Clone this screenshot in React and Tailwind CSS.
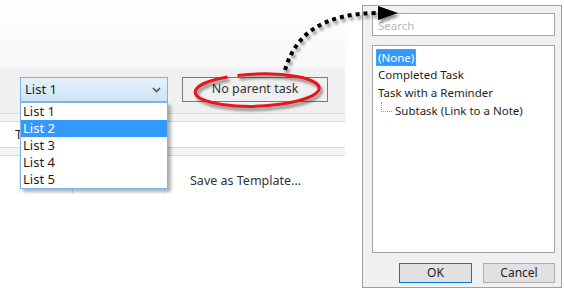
import React from 'react';

const font = { fontFamily: '"Noto Sans", "Open Sans", sans-serif' };

const Chevron = () => (
  <svg width="9" height="6" viewBox="0 0 9 6" className="text-[#555]">
    <path d="M1 1 L4.5 4.5 L8 1" fill="none" stroke="currentColor" strokeWidth="1.6" />
  </svg>
);

const LISTS = ['List 1', 'List 2', 'List 3', 'List 4', 'List 5'];

const TASKS = [
  { label: '(None)', selected: true },
  { label: 'Completed Task' },
  { label: 'Task with a Reminder' },
  { label: 'Subtask (Link to a Note)', child: true },
];

export default function App() {
  return (
    <div className="relative w-[564px] h-[290px] bg-white overflow-hidden flex text-[12px] text-[#1e1e1e]" style={font}>
      {/* Left: task editor strip */}
      <div className="w-[345px] flex flex-col">
        <div className="h-[68px] bg-gradient-to-b from-white to-[#f7f7f7]" />
        <div className="h-[46px] bg-[#f0f0f0] flex items-start pt-[9px] pl-[20px] gap-[14px] border-b border-[#dadada]">
          <div className="w-[148px] h-[25px] border border-[#7eb4ea] bg-gradient-to-b from-[#e5f1fb] to-[#cde4f7] flex items-center justify-between pl-[4px] pr-[6px] text-[13px]">
            <span>List 1</span>
            <Chevron />
          </div>
          <div className="w-[146px] h-[25px] border border-[#7a7a7a] bg-[#f0f0f0] flex items-center justify-center text-[12.5px] text-[#333]">
            No parent task
          </div>
        </div>
        <div className="h-[8px] bg-[#f3f3f3] border-b border-[#dadada]" />
        <div className="h-[26px] bg-white border-b border-[#dadada] flex items-center pl-[15px] text-[13px]">T</div>
        <div className="h-[8px] bg-[#f3f3f3] border-b border-[#dadada]" />
        <div className="h-[38px] bg-white flex">
          <div className="w-[20px] border-r border-[#e6e6e6]" />
          <div className="w-[53px] border-r border-[#e6e6e6]" />
          <div className="w-[92px] border-r border-[#e6e6e6]" />
          <div className="flex-1 flex items-center pl-[25px] pt-[13px] text-[12.5px] text-[#333]">Save as Template...</div>
        </div>
      </div>

      {/* Right: parent task picker dialog */}
      <div className="ml-[17px] mt-[5px] w-[200px] h-[283px] border border-[#a0a0a0] bg-[#f0f0f0] flex flex-col pl-[9px] pr-[6px] pt-[7px] text-[11.5px]">
        <div className="h-[23px] border border-[#a5a5a5] bg-white flex items-center pl-[5px] pt-[2px] text-[#b8b8b8]">Search</div>
        <div className="mt-[9px] h-[208px] border border-[#a5a5a5] bg-white pt-[2px] pl-[3px] flex flex-col">
          {TASKS.map((t) =>
            t.child ? (
              <div key={t.label} className="h-[18px] flex items-center">
                <div className="relative w-[19px] h-full">
                  <div className="absolute left-[5px] top-0 h-[10px] border-l border-dotted border-[#999]" />
                  <div className="absolute left-[5px] top-[9px] w-[11px] border-t border-dotted border-[#999]" />
                </div>
                <span>{t.label}</span>
              </div>
            ) : (
              <div key={t.label} className="h-[18px] flex items-center">
                <span
                  className={
                    t.selected
                      ? 'bg-[#3399ff] text-white px-[1px] border border-dotted border-[#e0902a] leading-[15px]'
                      : 'pl-[2px]'
                  }
                >
                  {t.label}
                </span>
              </div>
            )
          )}
        </div>
        <div className="mt-[10px] flex gap-[11px] pl-[27px] text-[12px]">
          <div className="w-[73px] h-[20px] border border-[#0078d7] bg-[#e1e1e1] flex items-center justify-center">OK</div>
          <div className="w-[72px] h-[20px] border border-[#adadad] bg-[#e1e1e1] flex items-center justify-center">Cancel</div>
        </div>
      </div>

      {/* Open dropdown list */}
      <div className="absolute left-[20px] top-[102px] w-[148px] border border-[#7eb4ea] bg-white shadow-[3px_3px_3px_rgba(0,0,0,0.3)] text-[13px]">
        {LISTS.map((l, i) => (
          <div key={l} className={`h-[17px] flex items-center pl-[2px] ${i === 1 ? 'bg-[#3399ff] text-white' : ''}`}>
            {l}
          </div>
        ))}
      </div>

      {/* Annotation: red ellipse + dotted arrow */}
      <svg className="absolute left-0 top-0 pointer-events-none" width="564" height="290">
        <defs>
          <filter id="sh" x="-20%" y="-20%" width="140%" height="160%">
            <feGaussianBlur in="SourceAlpha" stdDeviation="1.6" />
            <feOffset dx="2" dy="3" result="b" />
            <feComponentTransfer><feFuncA type="linear" slope="0.45" /></feComponentTransfer>
            <feMerge><feMergeNode /><feMergeNode in="SourceGraphic" /></feMerge>
          </filter>
        </defs>
        <g filter="url(#sh)">
          <g transform="rotate(-2 258 90)">
            <path d="M 228 76 A 62 16 0 1 0 238 74.9" fill="none" stroke="#e8141a" strokeWidth="3" />
          </g>
          <path d="M 285 70 C 296 32, 325 14, 376 13" fill="none" stroke="#000" strokeWidth="4" strokeDasharray="4 4" />
          <polygon points="378,6 398,13 378,20" fill="#000" />
        </g>
      </svg>
    </div>
  );
}
